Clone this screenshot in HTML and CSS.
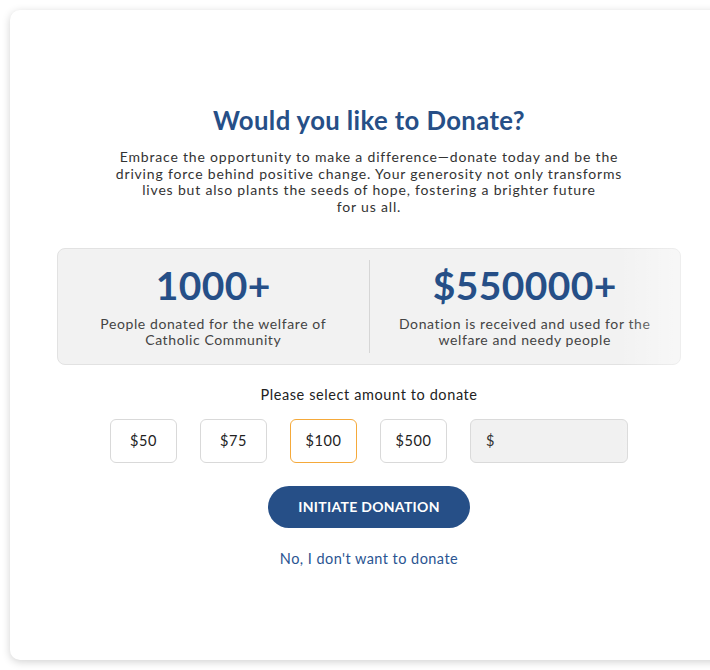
FILE: index.html
```html
<!DOCTYPE html>
<html lang="en">
<head>
    <meta charset="UTF-8">
    <meta name="viewport" content="width=device-width, initial-scale=1.0">
    <title>Donate</title>
    <link rel="stylesheet" href="styles.css">
</head>
<body>
<div class="card">
    <h1>Would you like to Donate?</h1>
    <p class="intro">
        <span>Embrace the opportunity to make a difference—donate today and be the</span>
        <span>driving force behind positive change. Your generosity not only transforms</span>
        <span>lives but also plants the seeds of hope, fostering a brighter future</span>
        <span>for us all.</span>
    </p>

    <div class="stats">
        <div class="stat">
            <div class="stat-num">1000+</div>
            <div class="stat-text">People donated for the welfare of<br>Catholic Community</div>
        </div>
        <div class="stat">
            <div class="stat-num">$550000+</div>
            <div class="stat-text">Donation is received and used for the<br>welfare and needy people</div>
        </div>
    </div>

    <p class="select-label">Please select amount to donate</p>
    <div class="amounts">
        <button type="button" class="amount">$50</button>
        <button type="button" class="amount">$75</button>
        <button type="button" class="amount selected">$100</button>
        <button type="button" class="amount">$500</button>
        <div class="custom">$</div>
    </div>

    <button type="button" class="donate-btn">INITIATE DONATION</button>
    <a href="#" class="decline">No, I don't want to donate</a>
</div>
</body>
</html>
```

FILE: styles.css
```css
html, body {
    overflow: hidden;
}

body {
    font-family: Lato, 'Open Sans', sans-serif;
    background: #ffffff;
    margin: 0;
    padding: 0;
    color: #333333;
    letter-spacing: 0.6px;
}

.card {
    position: relative;
    box-sizing: border-box;
    width: 718px;
    height: 650px;
    margin: 10px;
    padding-top: 94px;
    background: #ffffff;
    border-radius: 10px;
    box-shadow: 0 2px 8px rgba(0, 0, 0, 0.18);
    display: flex;
    flex-direction: column;
    align-items: center;
}

.card::after {
    content: "";
    position: absolute;
    top: 0;
    right: 0;
    bottom: 0;
    width: 110px;
    background: linear-gradient(to right, rgba(255, 255, 255, 0), rgba(255, 255, 255, 0.75));
    border-radius: 0 10px 10px 0;
    pointer-events: none;
}

h1 {
    margin: 0;
    font-size: 25.7px;
    font-weight: 700;
    line-height: 32px;
    letter-spacing: 0.4px;
    color: #264f87;
}

.intro {
    margin: 13px 0 0;
    display: flex;
    flex-direction: column;
    align-items: center;
    font-size: 14px;
    line-height: 16.7px;
    letter-spacing: 0.82px;
    color: #333333;
}

.intro span {
    white-space: nowrap;
}

.stats {
    margin-top: 32px;
    width: 624px;
    height: 117px;
    flex-shrink: 0;
    box-sizing: border-box;
    display: flex;
    align-items: center;
    background: #f2f2f2;
    border: 1px solid #e2e2e2;
    border-radius: 8px;
}

.stat {
    flex: 1;
    text-align: center;
    padding: 3px 0 4px;
}

.stat + .stat {
    border-left: 1px solid #d6d6d6;
}

.stat-num {
    font-size: 39px;
    font-weight: 700;
    line-height: 44px;
    letter-spacing: 0.4px;
    color: #264f87;
}

.stat-text {
    margin-top: 9px;
    font-size: 14px;
    line-height: 16.7px;
    color: #444444;
}

.select-label {
    margin: 21px 0 0;
    font-size: 14.5px;
    line-height: 18px;
    color: #222222;
}

.amounts {
    margin-top: 15px;
    display: flex;
    gap: 23px;
}

.amount {
    width: 67px;
    height: 44px;
    font-family: inherit;
    font-size: 14.5px;
    letter-spacing: 0.6px;
    color: #222222;
    background: #ffffff;
    border: 1px solid #d9d9d9;
    border-radius: 6px;
    cursor: pointer;
}

.amount.selected {
    border-color: #f5a93a;
}

.custom {
    width: 158px;
    height: 44px;
    box-sizing: border-box;
    padding-left: 15px;
    display: flex;
    align-items: center;
    font-size: 14.5px;
    color: #333333;
    background: #f1f1f1;
    border: 1px solid #dadada;
    border-radius: 6px;
}

.donate-btn {
    margin-top: 23px;
    width: 202px;
    height: 42px;
    flex-shrink: 0;
    font-family: inherit;
    font-size: 14px;
    font-weight: 700;
    letter-spacing: 0.3px;
    color: #ffffff;
    background: #264f87;
    border: none;
    border-radius: 21px;
    cursor: pointer;
}

.decline {
    margin-top: 22px;
    font-size: 14.5px;
    letter-spacing: 0.45px;
    color: #2a5592;
    text-decoration: none;
}
```
